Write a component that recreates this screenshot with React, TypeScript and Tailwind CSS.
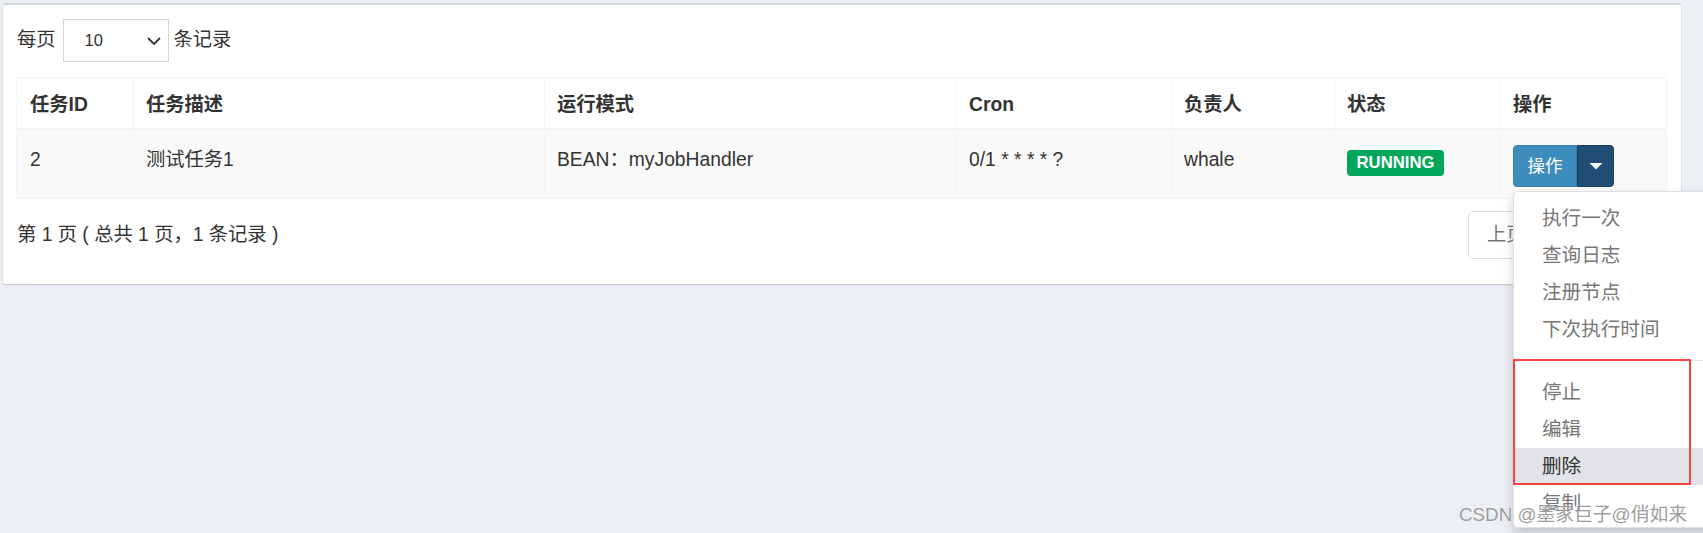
import React from "react";

const cols = "grid grid-cols-[116px_411px_412px_215px_163px_166px_167px]";

export default function App() {
  const items1 = ["执行一次", "查询日志", "注册节点", "下次执行时间"];
  return (
    <div className="relative w-[1703px] h-[533px] overflow-hidden bg-[#ecf0f5] font-['Liberation_Sans','Noto_Sans_CJK_SC',sans-serif] text-[#333]">
      {/* Card */}
      <div className="ml-[3px] mt-[3px] w-[1678px] h-[281px] bg-white rounded-[3px] border-t-2 border-[#d2d6de] shadow-[0_1px_2px_rgba(0,0,0,0.18)] pl-[14px] pr-[14px] pt-[14px]">
        {/* length selector */}
        <div className="flex items-center h-[43px] text-[19.3px]">
          <span>每页</span>
          <div className="ml-[7px] w-[106px] h-[43px] border border-[#d2d6de] flex items-center pl-[21px] pr-[5px]">
            <span className="text-[16.5px]">10</span>
            <svg className="ml-auto mr-[1px]" width="16" height="10" viewBox="0 0 16 10">
              <polyline points="2,2 8,8 14,2" fill="none" stroke="#333" strokeWidth="1.8" />
            </svg>
          </div>
          <span className="ml-[5px]">条记录</span>
        </div>

        {/* table */}
        <div className="mt-[15px] -ml-[1px] w-[1651px] border border-[#f4f4f4] border-b-0">
          <div className={`${cols} border-b-2 border-[#f4f4f4]`}>
            {["任务ID", "任务描述", "运行模式", "Cron", "负责人", "状态", "操作"].map((h, i) => (
              <div
                key={h}
                className={`h-[50px] flex items-center pl-[12px] pt-[4px] font-bold text-[19.3px] ${i > 0 ? "border-l border-[#f4f4f4]" : "pl-[13px]"}`}
              >
                {h}
              </div>
            ))}
          </div>
          <div className={`${cols} bg-[#f9f9f9] border-b border-[#f4f4f4] text-[19.3px]`}>
            <div className="h-[68px] pl-[13px] pt-[16px] leading-[28px]">2</div>
            <div className="h-[68px] pl-[12px] pt-[16px] leading-[28px] border-l border-[#f4f4f4]">测试任务1</div>
            <div className="h-[68px] pl-[12px] pt-[16px] leading-[28px] border-l border-[#f4f4f4]">BEAN：myJobHandler</div>
            <div className="h-[68px] pl-[12px] pt-[16px] leading-[28px] border-l border-[#f4f4f4]">0/1 * * * * ?</div>
            <div className="h-[68px] pl-[12px] pt-[16px] leading-[28px] border-l border-[#f4f4f4]">whale</div>
            <div className="h-[68px] pl-[12px] pt-[18px] border-l border-[#f4f4f4]">
              <span className="inline-flex items-center justify-center w-[97px] h-[26px] rounded-[4px] bg-[#00a65a] text-white font-bold text-[16.7px] leading-none">
                RUNNING
              </span>
            </div>
            <div className="h-[68px] pl-[12px] pt-[15px] border-l border-[#f4f4f4]">
              <div className="flex h-[42px]">
                <div className="w-[64px] h-[42px] bg-[#3c8dbc] border border-[#367fa9] rounded-l-[4px] flex items-center justify-center text-white text-[17.5px]">
                  操作
                </div>
                <div className="w-[37px] h-[42px] bg-[#204d74] border border-[#1a3f60] rounded-r-[4px] flex items-center justify-center">
                  <svg width="14" height="8" viewBox="0 0 14 8">
                    <polygon points="0.5,1 13.5,1 7,7.5" fill="#fff" />
                  </svg>
                </div>
              </div>
            </div>
          </div>
        </div>

        {/* footer */}
        <div className="mt-[12px] flex items-center justify-between w-[1650px] h-[48px]">
          <span className="text-[19.3px] pt-[1px]">第 1 页 ( 总共 1 页，1 条记录 )</span>
          <div className="flex h-[48px] text-[19.3px]">
            <div className="w-[78px] h-[48px] border border-[#ddd] rounded-l-[5px] flex items-center pl-[18px] text-[#777]">上页</div>
            <div className="w-[44px] h-[48px] border border-[#367fa9] bg-[#337ab7] flex items-center justify-center text-white">1</div>
            <div className="w-[77px] h-[48px] border border-[#ddd] rounded-r-[5px] flex items-center justify-center text-[#777]">下页</div>
          </div>
        </div>
      </div>

      {/* dropdown menu */}
      <div className="absolute left-[1513px] top-[191px] w-[210px] h-[337px] bg-white rounded-[5px] border border-[rgba(0,0,0,0.12)] shadow-[0_6px_12px_rgba(0,0,0,0.175)] pt-[8px] text-[19.6px] text-[#777]">
        {items1.map((t) => (
          <div key={t} className="h-[37px] leading-[37px] pl-[28px]">{t}</div>
        ))}
        <div className="mt-[12px] mb-[13px] h-px bg-[#e5e5e5]" />
        <div className="h-[37px] leading-[37px] pl-[28px]">停止</div>
        <div className="h-[37px] leading-[37px] pl-[28px]">编辑</div>
        <div className="h-[37px] leading-[37px] pl-[28px] bg-[#e1e3e9] text-[#333]">删除</div>
        <div className="h-[37px] leading-[37px] pl-[28px]">复制</div>
      </div>

      {/* red annotation box */}
      <div className="absolute left-[1513px] top-[359px] w-[178px] h-[126px] border-2 border-[#ff4040]" />

      {/* watermark */}
      <div className="absolute left-[1459px] top-[502px] text-[18.8px] leading-[26px] text-[rgba(130,130,130,0.8)] [text-shadow:0_0_1px_rgba(255,255,255,0.9)]">
        CSDN @墨家巨子@俏如来
      </div>
    </div>
  );
}
